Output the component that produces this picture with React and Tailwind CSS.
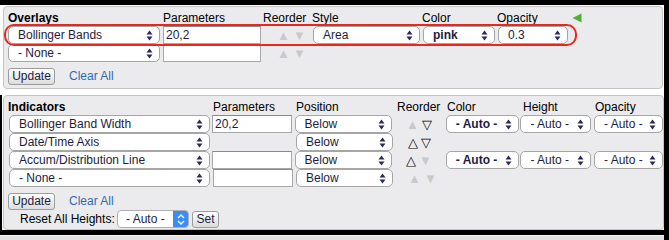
import React from 'react'

const font = { fontFamily: '"Liberation Sans", Arial, sans-serif' }

const Arrows = () => (
  <svg width="7" height="11" viewBox="0 0 7 11" className="shrink-0">
    <path d="M3.5 0.5 L6.5 4.5 L0.5 4.5 Z" fill="#2a2a5a" />
    <path d="M3.5 10.5 L6.5 6.5 L0.5 6.5 Z" fill="#2a2a5a" />
  </svg>
)

const Select = ({ label, width, bold = false, pad = 'pl-[9px]' }) => (
  <div
    className={`flex h-[18px] items-center justify-between rounded-[5px] border border-[#a6a6a6] bg-white pr-[6px] text-[12px] leading-none text-[#1d1d3d] ${pad} ${bold ? 'font-bold' : ''}`}
    style={{ width }}
  >
    <span className="whitespace-nowrap">{label}</span>
    <Arrows />
  </div>
)

const Input = ({ value = '', width }) => (
  <div
    className="flex h-[18px] items-center border border-[#a8a8a8] border-t-[#8a8a8a] bg-white pl-[2px] text-[12px] leading-none text-[#1d1d3d]"
    style={{ width }}
  >
    {value}
  </div>
)

const Reorder = ({ up, down }) => (
  <div className="flex items-center gap-[3px] text-[13px] leading-none">
    <span className={up ? 'text-black' : 'text-[#c9c9c9]'}>{up ? '△' : '▲'}</span>
    <span className={down ? 'text-black' : 'text-[#c9c9c9]'}>{down ? '▽' : '▼'}</span>
  </div>
)

const Button = ({ children, className = '' }) => (
  <div
    className={`flex h-[17px] items-center justify-center rounded-[3px] border border-[#9c9c9c] bg-gradient-to-b from-white to-[#dcdcdc] text-[12px] leading-none text-[#1d1d3d] ${className}`}
  >
    {children}
  </div>
)

export default function App() {
  return (
    <div className="h-[240px] w-[669px] overflow-hidden bg-white text-[12px] text-black" style={font}>
      <div className="border-t-[5px] border-r-[5px] border-black">
        {/* Overlays */}
        <div className="ml-[3px] mr-[1px] mt-[1px] h-[83px] rounded-[4px] border border-[#c4c4c4] bg-[#ebebed] pl-[4px] pt-[4px]">
          <div className="flex h-[15px] items-end pb-[2px] leading-none">
            <div className="w-[155px] font-bold">Overlays</div>
            <div className="w-[100px]">Parameters</div>
            <div className="w-[49px]">Reorder</div>
            <div className="w-[110px]">Style</div>
            <div className="w-[75px]">Color</div>
            <div className="w-[75px]">Opacity</div>
            <svg width="10" height="10" viewBox="0 0 10 10" className="mb-[1px]">
              <path d="M0.5 5 L9.5 0.5 L9.5 9.5 Z" fill="#4fb233" />
            </svg>
          </div>
          <div className="relative flex h-[18px] items-center">
            <div className="pointer-events-none absolute -left-[4px] -top-[2px] h-[22px] w-[573px] rounded-[10px] border-2 border-[#e8281d]" />
            <div className="w-[155px]">
              <Select label="Bollinger Bands" width={152} />
            </div>
            <div className="w-[100px]">
              <Input value="20,2" width={98} />
            </div>
            <div className="w-[49px] pl-[14px]">
              <Reorder />
            </div>
            <div className="w-[110px] pl-[1px]">
              <Select label="Area" width={107} />
            </div>
            <div className="w-[75px] pl-[1px]">
              <Select label="pink" width={72} bold />
            </div>
            <div className="w-[75px] pl-[1px]">
              <Select label="0.3" width={70} />
            </div>
          </div>
          <div className="flex h-[18px] items-center">
            <div className="w-[155px]">
              <Select label="- None -" width={152} />
            </div>
            <div className="w-[100px]">
              <Input width={98} />
            </div>
            <div className="w-[49px] pl-[14px]">
              <Reorder />
            </div>
          </div>
          <div className="mt-[5px] flex items-center">
            <Button className="w-[47px]">Update</Button>
            <span className="ml-[14px] text-[#2f6cb3]">Clear All</span>
          </div>
        </div>
        <div className="h-[6px]" />
        {/* Indicators */}
        <div className="border-b-[5px] border-l-[2px] border-black">
          <div className="ml-[1px] h-[135px] overflow-hidden rounded-[4px] border border-[#c4c4c4] bg-[#ebebed] pl-[4px] pt-[4px]">
            <div className="flex h-[15px] items-end pb-[2px] leading-none">
              <div className="w-[205px] font-bold">Indicators</div>
              <div className="w-[83px]">Parameters</div>
              <div className="w-[101px]">Position</div>
              <div className="w-[50px]">Reorder</div>
              <div className="w-[76px]">Color</div>
              <div className="w-[72px]">Height</div>
              <div>Opacity</div>
            </div>
            {[
              ['Bollinger Band Width', '20,2', false, true, true],
              ['Date/Time Axis', null, true, true, false],
              ['Accum/Distribution Line', '', true, false, true],
              ['- None -', '', false, false, false],
            ].map(([name, param, up, down, styled]) => (
              <div key={name} className="flex h-[18px] items-center">
                <div className="w-[205px] pl-[1px]">
                  <Select label={name} width={201} />
                </div>
                <div className="w-[83px]">
                  {param !== null && <Input value={param} width={80} />}
                </div>
                <div className="w-[112px]">
                  <Select label="Below" width={97} />
                </div>
                <div className="w-[40px]">
                  <Reorder up={up} down={down} />
                </div>
                {styled && (
                  <>
                    <div className="w-[75px]">
                      <Select label="- Auto -" width={73} bold />
                    </div>
                    <div className="w-[74px]">
                      <Select label="- Auto -" width={71} />
                    </div>
                    <div className="shrink-0">
                      <Select label="- Auto -" width={69} />
                    </div>
                  </>
                )}
              </div>
            ))}
            <div className="mt-[5px] flex items-center">
              <Button className="w-[47px]">Update</Button>
              <span className="ml-[14px] text-[#2f6cb3]">Clear All</span>
            </div>
            <div className="flex items-center pl-[12px]">
              <span className="w-[97px] whitespace-nowrap">Reset All Heights:</span>
              <div className="flex h-[18px] w-[72px] items-stretch overflow-hidden rounded-[4px] border border-[#b0b0b0] bg-white">
                <span className="flex flex-1 items-center pl-[8px] leading-none text-[#1d1d3d]">- Auto -</span>
                <span className="flex w-[15px] items-center justify-center bg-[#3b8df5]">
                  <svg width="8" height="11" viewBox="0 0 8 11">
                    <path d="M1 4 L4 1 L7 4 M1 7 L4 10 L7 7" stroke="white" strokeWidth="1.4" fill="none" />
                  </svg>
                </span>
              </div>
              <Button className="ml-[3px] w-[27px]">Set</Button>
            </div>
          </div>
        </div>
        <div className="h-[10px] border-t border-[#f4f4f4] bg-[#e3e3e3]" />
      </div>
    </div>
  )
}
